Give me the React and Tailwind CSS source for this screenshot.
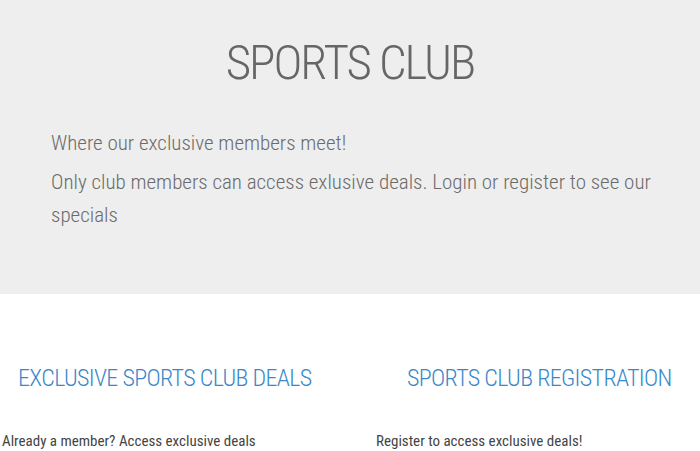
import React from "react";

const App = () => {
  return (
    <div
      className="min-h-screen bg-white text-[#555]"
      style={{ fontFamily: "Roboto, 'Liberation Sans', sans-serif" }}
    >
      <div className="bg-[#eeeeee] h-[294px] pt-[33px]">
        <h1 className="text-center text-[49px] leading-[60px] font-light text-[#666] tracking-[-2px] [font-stretch:condensed]">
          SPORTS CLUB
        </h1>
        <div className="pl-[51px] pr-[30px] mt-[34px] text-[21px] font-light text-[#6b6b6b] leading-[33px] [font-stretch:condensed]">
          <p className="mb-[6px]">Where our exclusive members meet!</p>
          <p>
            Only club members can access exlusive deals. Login or register to
            see our specials
          </p>
        </div>
      </div>

      <div className="grid grid-cols-2 pt-[69px]">
        <div>
          <h3 className="pl-[18px] text-[24px] font-light text-[#3a87c9] leading-[30px] tracking-[-0.65px] [font-stretch:condensed]">
            EXCLUSIVE SPORTS CLUB DEALS
          </h3>
          <p className="pl-[2px] mt-[38px] text-[15px] leading-[20px] text-[#444] [font-stretch:condensed]">
            Already a member? Access exclusive deals
          </p>
        </div>
        <div>
          <h3 className="pl-[57px] text-[24px] font-light text-[#3a87c9] leading-[30px] tracking-[-0.65px] [font-stretch:condensed]">
            SPORTS CLUB REGISTRATION
          </h3>
          <p className="pl-[26px] mt-[38px] text-[15px] leading-[20px] text-[#444] [font-stretch:condensed]">
            Register to access exclusive deals!
          </p>
        </div>
      </div>
    </div>
  );
};

export default App;
